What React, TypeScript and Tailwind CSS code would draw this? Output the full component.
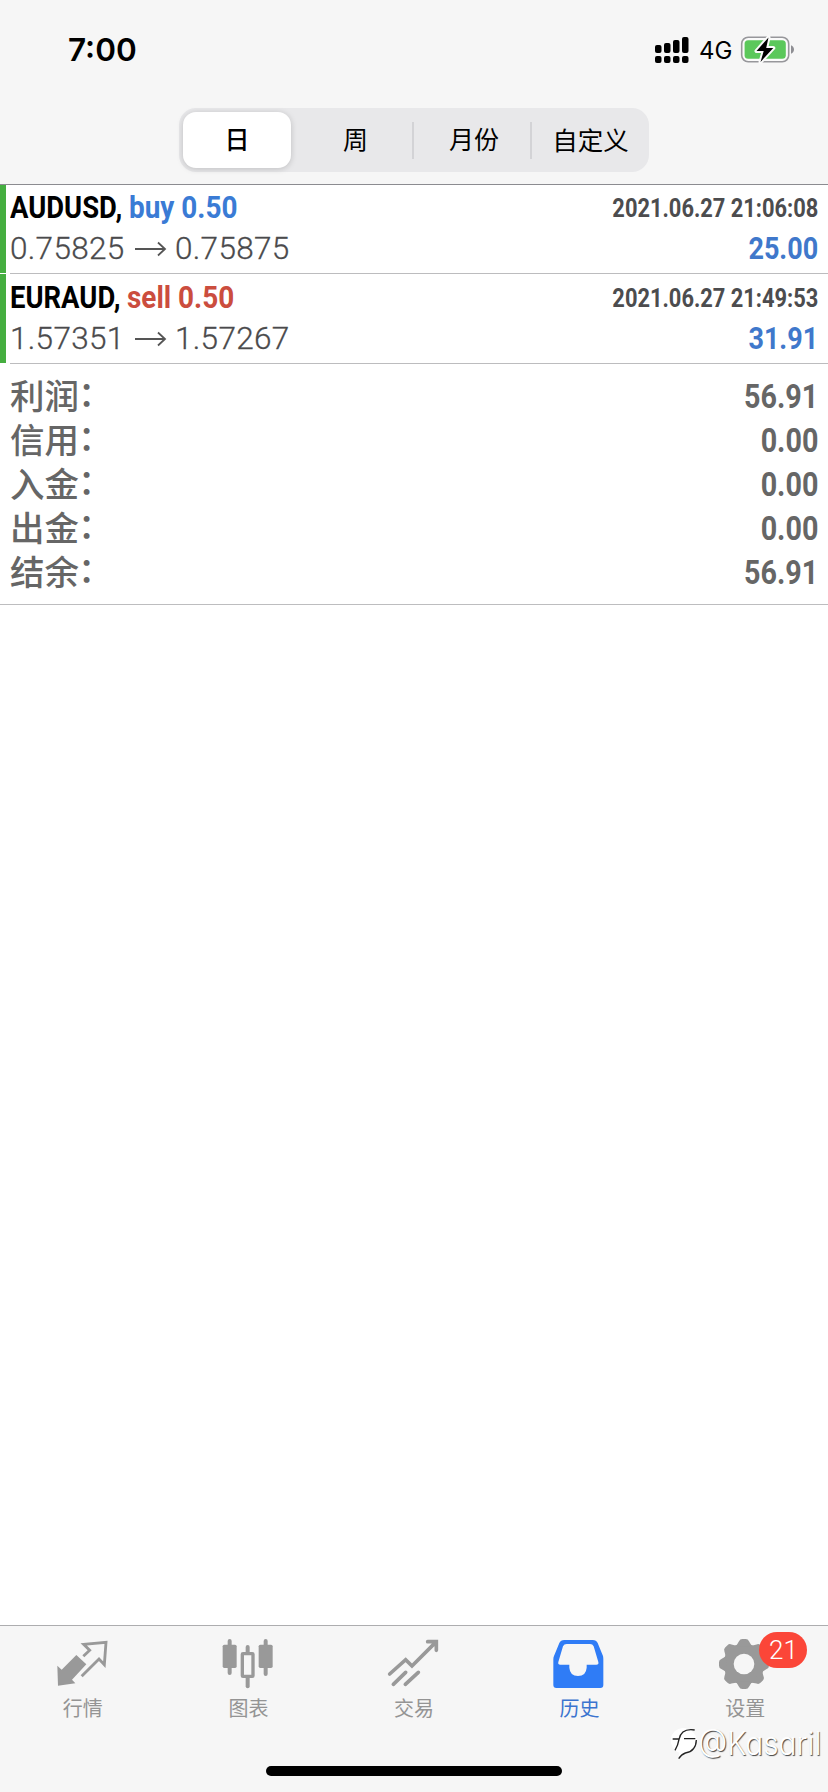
import React from "react";

const deals = [
  {
    symbol: "AUDUSD",
    side: "buy",
    volume: "0.50",
    open: "0.75825",
    close: "0.75875",
    time: "2021.06.27 21:06:08",
    profit: "25.00",
  },
  {
    symbol: "EURAUD",
    side: "sell",
    volume: "0.50",
    open: "1.57351",
    close: "1.57267",
    time: "2021.06.27 21:49:53",
    profit: "31.91",
  },
];

const summary = [
  { label: "利润", value: "56.91" },
  { label: "信用", value: "0.00" },
  { label: "入金", value: "0.00" },
  { label: "出金", value: "0.00" },
  { label: "结余", value: "56.91" },
];

// condensed bold face used for symbols and amounts
const narrow = "inline-block whitespace-pre font-['Roboto',sans-serif] font-bold";

function StatusBar() {
  return (
    <div className="flex h-[108px] items-start justify-between pl-[68px] pr-[33px] pt-[30px]">
      <span className="font-['Inter',sans-serif] text-[31.5px] font-semibold leading-[40px] text-black">
        7:00
      </span>
      <div className="flex h-10 items-center">
        <svg width="34" height="26" viewBox="0 0 34 26" className="mr-[10px]">
          <rect x="0" y="8" width="6.5" height="8" rx="2" />
          <rect x="9" y="6" width="6.5" height="10" rx="2" />
          <rect x="18" y="3" width="6.5" height="13" rx="2" />
          <rect x="27" y="0" width="6.5" height="16" rx="2" />
          <rect x="0" y="19" width="6.5" height="7" rx="2" />
          <rect x="9" y="19" width="6.5" height="7" rx="2" />
          <rect x="18" y="19" width="6.5" height="7" rx="2" />
          <rect x="27" y="19" width="6.5" height="7" rx="2" />
        </svg>
        <span className="w-[42px] whitespace-nowrap pt-px font-['Inter',sans-serif] text-[24px] leading-[40px] text-black">
          4G
        </span>
        <svg width="54" height="26" viewBox="0 0 54 26" className="overflow-visible">
          <rect x="0.7" y="0.2" width="47" height="24.6" rx="6.5" fill="#fafafa" stroke="#97979b" strokeWidth="1.6" />
          <rect x="3.6" y="3.2" width="41.2" height="18.6" rx="3.5" fill="#5bc85b" />
          <path d="M50 8.2c2 .8 3 2.400 3 4.300s-1 3.500-3 4.300z" fill="#8e8e93" />
          <path
            d="M27.500 0.500 15.500 14h7.200L19.500 25 32.300 11H25.200z"
            fill="#000"
            stroke="#fafafa"
            strokeWidth="4"
            strokeLinejoin="round"
            paintOrder="stroke"
          />
        </svg>
      </div>
    </div>
  );
}

function PeriodTabs() {
  return (
    <div className="mx-auto flex h-16 w-[470px] items-center rounded-[17px] bg-[#e8e8ea] p-1 font-['Noto_Sans_CJK_SC',sans-serif] text-[25px] text-black">
      <div className="flex h-14 w-[108px] items-center justify-center rounded-[13px] bg-white pb-[2px] font-medium shadow-[0_1px_6px_rgba(0,0,0,0.18)]">
        日
      </div>
      <div className="flex h-[37px] w-[123px] items-center justify-center border-r-2 border-[#d3d3d6] pb-[2px] pl-2">
        周
      </div>
      <div className="flex h-[37px] w-[118px] items-center justify-center border-r-2 border-[#d3d3d6] pb-[2px] pl-1">
        月份
      </div>
      <div className="flex h-[37px] flex-1 items-center justify-center pb-[2px] pl-1 text-[25.5px]">自定义</div>
    </div>
  );
}

function DealRow({ deal }: { deal: (typeof deals)[number] }) {
  return (
    <div className="flex h-[90px] first:h-[89px]">
      <div className="mb-px w-[6px] bg-[#45ae40]" />
      <div className="ml-1 flex flex-1 flex-col justify-end border-b border-[#bcbcbe] pb-[5px] pr-[10px]">
        <div className="flex h-[44px] items-center justify-between leading-[44px]">
          <span className="flex text-[31px]">
            <span className={`${narrow} -mr-[7.5px] origin-left scale-x-[0.885] text-black`}>{deal.symbol},</span>
            <span
              className={`${narrow} origin-left scale-x-[0.9] ${
                deal.side === "buy" ? "text-[#3a7bd5]" : "text-[#cb4d3e]"
              }`}
            >
              {deal.side} {deal.volume}
            </span>
          </span>
          <span className={`${narrow} origin-right scale-x-[0.857] text-[25.5px] text-[#4c4c4e]`}>{deal.time}</span>
        </div>
        <div className="flex h-[38px] items-center justify-between leading-[38px]">
          <div className="flex items-center font-['Roboto',sans-serif] text-[31.5px] font-light tracking-[0.3px] text-[#4a4a4c] [-webkit-text-stroke:0.3px_#4a4a4c]">
            <span className="w-[114px]">{deal.open}</span>
            <svg width="32" height="16" viewBox="0 0 32 16" fill="none" stroke="#555" strokeWidth="1.8" className="ml-[11px] mr-[8px]">
              <path d="M0 8h30M23 1.500 30 8l-7 6.500" />
            </svg>
            {deal.close}
          </div>
          <span className={`${narrow} origin-right scale-x-[0.87] text-[31px] text-[#3f78cb]`}>{deal.profit}</span>
        </div>
      </div>
    </div>
  );
}

function Summary() {
  return (
    <div className="flex h-[241px] flex-col border-b border-[#bdbdbf] px-[10px] pt-[10px] text-[#666]">
      {summary.map((item) => (
        <div key={item.label} className="flex h-[44px] items-center justify-between">
          <span className="flex pb-1 font-['Noto_Sans_CJK_SC',sans-serif] text-[34.5px] font-medium leading-[40px]">
            {item.label}
            <span className="-translate-x-px -translate-y-[3px]">：</span>
          </span>
          <span className={`${narrow} origin-right scale-x-[0.87] pt-[2px] text-[33px] leading-[42px]`}>{item.value}</span>
        </div>
      ))}
    </div>
  );
}

function QuotesIcon() {
  return (
    <svg width="50" height="50" viewBox="173 81 150 150" className="overflow-visible">
      <path d="M171 161 184 173 228 129 258 157 215 203 225 214 173 221z" fill="#999" />
      <path d="M249 133 268 115 250 97 317 91 312 158 296 141 244 193" fill="none" stroke="#999" strokeWidth="8.500" />
    </svg>
  );
}

function ChartIcon() {
  return (
    <svg width="50" height="50" viewBox="670 81 150 150" className="overflow-visible" fill="#999">
      <rect x="684" y="81" width="12" height="108" rx="6" />
      <rect x="669" y="98" width="42" height="70" rx="5" />
      <rect x="792" y="81" width="12" height="111" rx="6" />
      <rect x="777" y="98" width="42" height="70" rx="5" />
      <rect x="738" y="99" width="12" height="130" rx="6" />
      <rect x="728" y="125" width="32" height="68" rx="2" fill="#f6f6f6" stroke="#999" strokeWidth="10" />
    </svg>
  );
}

function TradeIcon() {
  return (
    <svg width="50" height="50" viewBox="267 81 150 150" className="overflow-visible" fill="none" stroke="#999" strokeWidth="11" strokeLinecap="round">
      <path d="M269 186 317 143 336 162 406 92M383 89H409V115M280 217 317 181M316 217 355 181" />
    </svg>
  );
}

function HistoryIcon() {
  return (
    <svg width="50" height="50" viewBox="764 81 150 150" className="overflow-visible">
      <path
        d="M792 84H877Q888 84 892 93L908 132Q909 136 909 142V219Q909 228 900 228H768Q759 228 759 219V142Q759 136 761 132L777 93Q781 84 792 84Z"
        fill="#2f7cf6"
      />
      <path
        d="M799 96H869Q877 96 880 103L894 150Q896 158 888 158H859V167Q857 192 833 192Q809 192 807 167V158H780Q772 158 774 150L788 103Q791 96 799 96Z"
        fill="#f6f6f6"
      />
    </svg>
  );
}

function SettingsIcon() {
  return (
    <svg width="50" height="50" viewBox="360 81 150 150" className="overflow-visible">
      <g fill="#999" transform="translate(432 156)">
        <circle r="61" />
        {[0, 45, 90, 135, 180, 225, 270, 315].map((angle) => (
          <path key={angle} d="M-25-53Q-19-60-15-68Q-12-75-5-75H5Q12-75 15-68Q19-60 25-53Z" transform={`rotate(${angle})`} />
        ))}
        <circle r="31" fill="#f6f6f6" />
      </g>
    </svg>
  );
}

const tabs = [
  { label: "行情", icon: <QuotesIcon /> },
  { label: "图表", icon: <ChartIcon /> },
  { label: "交易", icon: <TradeIcon /> },
  { label: "历史", icon: <HistoryIcon />, active: true },
  { label: "设置", icon: <SettingsIcon />, badge: 21 },
];

function TabBar() {
  return (
    <div className="relative flex h-[167px] flex-col justify-between border-t border-[#adadaf] bg-[#f6f6f6] pb-4">
      <div className="grid grid-cols-5 pt-[13px]">
        {tabs.map((tab) => (
          <div key={tab.label} className="relative flex flex-col items-center">
            {tab.icon}
            <span
              className={`mt-[4px] font-['Noto_Sans_CJK_SC',sans-serif] text-[20px] leading-[30px] ${
                tab.active ? "text-[#3b74cf]" : "text-[#949494]"
              }`}
            >
              {tab.label}
            </span>
            {tab.badge && (
              <span className="absolute left-[97px] top-[-7px] flex h-9 w-12 items-center justify-center rounded-full bg-[#fb4638] font-['Roboto',sans-serif] text-[26px] font-light text-white">
                {tab.badge}
              </span>
            )}
          </div>
        ))}
      </div>
      <div className="mx-auto h-[10px] w-[296px] rounded-full bg-black" />
      <div className="absolute right-[7px] top-[98px] flex items-center text-white">
        <svg width="30" height="34" viewBox="24 45 90 102" className="mr-[3px] overflow-visible">
          <path d="M68 48a42 38 0 0 1 0 76L54 142 58 122A38 38 0 0 1 68 48z" fill="#fff" />
          <path
            d="M38 81H56M45 115Q54 100 57 82 64 48 104 54M72 80H106M109 84Q108 118 76 123 64 127 56 140"
            fill="none"
            stroke="#222"
            strokeWidth="4"
          />
        </svg>
        <div className="flex w-[120px] justify-end">
          <span className="origin-right scale-x-[0.93] font-['Inter',sans-serif] text-[32px] font-light leading-[40px] [font-feature-settings:'cv11'] [text-shadow:1px_1px_1px_#444]">
            @Kasaril
          </span>
        </div>
      </div>
    </div>
  );
}

export default function App() {
  return (
    <div className="flex h-[1792px] w-[828px] flex-col overflow-hidden bg-white">
      <header className="h-[185px] border-b border-[#8b8b90] bg-[#f6f6f6]">
        <StatusBar />
        <PeriodTabs />
      </header>
      <main className="flex-1">
        {deals.map((deal) => (
          <DealRow key={deal.symbol} deal={deal} />
        ))}
        <Summary />
      </main>
      <TabBar />
    </div>
  );
}
